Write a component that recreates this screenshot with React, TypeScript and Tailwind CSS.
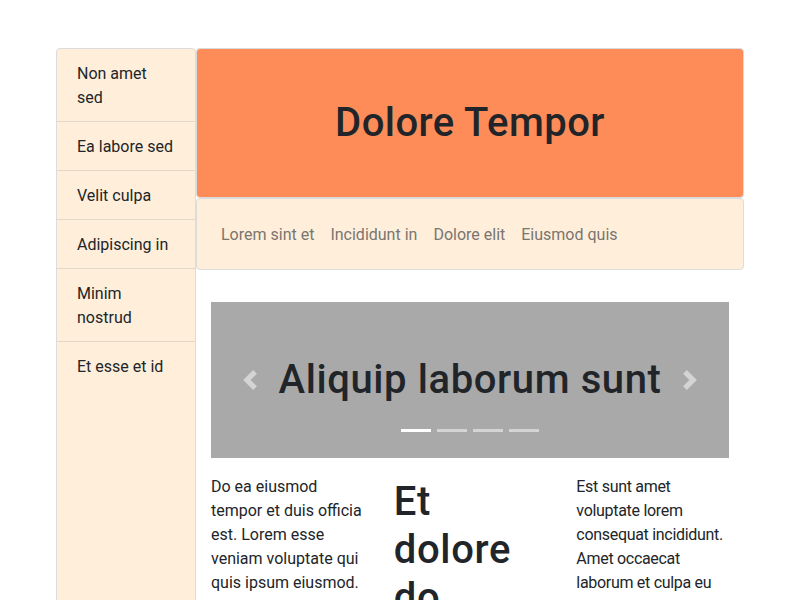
import React from "react";

const font = "font-['Roboto','Noto_Sans',sans-serif]";

function Chevron({ dir }: { dir: "left" | "right" }) {
  return (
    <svg width="20" height="20" viewBox="0 0 8 8" className="opacity-50">
      {dir === "left" ? (
        <path fill="#fff" d="M5.25 0l-4 4 4 4 1.5-1.5L4.25 4l2.5-2.5L5.25 0z" />
      ) : (
        <path fill="#fff" d="M2.75 0l-1.5 1.5L3.75 4l-2.5 2.5L2.75 8l4-4-4-4z" />
      )}
    </svg>
  );
}

export default function App() {
  const side = [
    "Non amet sed",
    "Ea labore sed",
    "Velit culpa",
    "Adipiscing in",
    "Minim nostrud",
    "Et esse et id",
  ];
  const nav = ["Lorem sint et", "Incididunt in", "Dolore elit", "Eiusmod quis"];
  return (
    <div className={`${font} text-[#212529] text-base leading-6 bg-white h-[600px] overflow-hidden`}>
      <div className="flex pt-12 pl-[56px] pr-[56px]">
        <div className="w-[140px] shrink-0 h-[600px] bg-[#ffefda] border border-[#dcdcdc] rounded-[4px] flex flex-col">
          {side.map((s, i) => (
            <div
              key={s}
              className={`px-5 pt-[13px] pb-[11px] ${i < side.length - 1 ? "border-b border-[#e2d8c8]" : ""}`}
            >
              {s}
            </div>
          ))}
        </div>
        <div className="flex-1 flex flex-col">
          <div className="bg-[#fd8c59] border border-[#dcdcdc] rounded-[4px] h-[150px] flex items-center justify-center">
            <h1 className="text-[40px] leading-[48px] font-medium tracking-[0.45px]">Dolore Tempor</h1>
          </div>
          <div className="bg-[#ffefda] border border-[#dcdcdc] rounded-[4px] h-[72px] flex items-center px-4 pt-[2px]">
            {nav.map((n) => (
              <span key={n} className="px-2 text-[#7a7570]">
                {n}
              </span>
            ))}
          </div>
          <div className="px-[15px] mt-8">
            <div className="relative bg-[#a9a9a9] h-[156px] flex items-center justify-center">
              <h2 className="text-[40px] leading-[48px] font-medium tracking-[0.6px]">Aliquip laborum sunt</h2>
              <div className="absolute left-0 top-0 bottom-0 w-[15%] flex items-center justify-center">
                <Chevron dir="left" />
              </div>
              <div className="absolute right-0 top-0 bottom-0 w-[15%] flex items-center justify-center">
                <Chevron dir="right" />
              </div>
              <div className="absolute left-0 right-0 bottom-[26px] flex justify-center gap-[6px]">
                <span className="w-[30px] h-[3px] bg-white" />
                <span className="w-[30px] h-[3px] bg-white/50" />
                <span className="w-[30px] h-[3px] bg-white/50" />
                <span className="w-[30px] h-[3px] bg-white/50" />
              </div>
            </div>
            <div className="grid grid-cols-3 gap-[30px] mt-4 pt-px">
              <p>Do ea eiusmod tempor et duis officia est. Lorem esse veniam voluptate qui quis ipsum eiusmod.</p>
              <h3 className="text-[40px] leading-[48px] font-medium tracking-[0.7px] pt-[3px]">Et dolore do</h3>
              <p className="tracking-[-0.3px]">Est sunt amet voluptate lorem consequat incididunt. Amet occaecat laborum et culpa eu</p>
            </div>
          </div>
        </div>
      </div>
    </div>
  );
}
